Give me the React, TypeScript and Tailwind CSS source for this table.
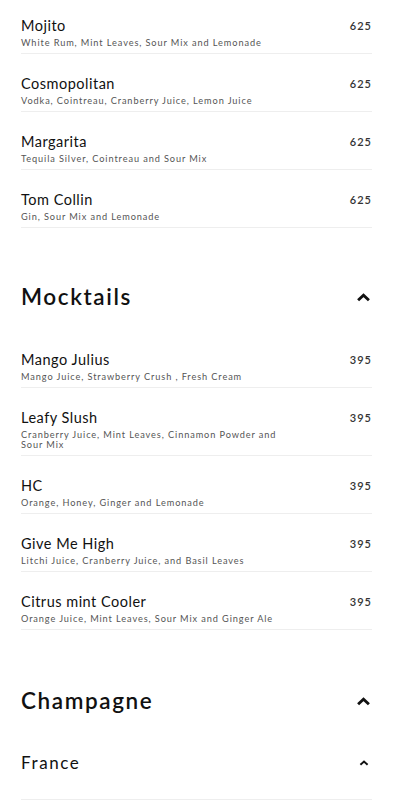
import React from 'react';

interface Item {
    name: string;
    desc: string;
    price: string;
}

const cocktails: Item[] = [
    { name: 'Mojito', desc: 'White Rum, Mint Leaves, Sour Mix and Lemonade', price: '625' },
    { name: 'Cosmopolitan', desc: 'Vodka, Cointreau, Cranberry Juice, Lemon Juice', price: '625' },
    { name: 'Margarita', desc: 'Tequila Silver, Cointreau and Sour Mix', price: '625' },
    { name: 'Tom Collin', desc: 'Gin, Sour Mix and Lemonade', price: '625' },
];

const mocktails: Item[] = [
    { name: 'Mango Julius', desc: 'Mango Juice, Strawberry Crush , Fresh Cream', price: '395' },
    { name: 'Leafy Slush', desc: 'Cranberry Juice, Mint Leaves, Cinnamon Powder and Sour Mix', price: '395' },
    { name: 'HC', desc: 'Orange, Honey, Ginger and Lemonade', price: '395' },
    { name: 'Give Me High', desc: 'Litchi Juice, Cranberry Juice, and Basil Leaves', price: '395' },
    { name: 'Citrus mint Cooler', desc: 'Orange Juice, Mint Leaves, Sour Mix and Ginger Ale', price: '395' },
];

const Chevron = ({ size }: { size: 'lg' | 'sm' }) => (
    <svg
        viewBox="0 0 16 10"
        className={size === 'lg' ? 'w-[15px] h-[9px]' : 'w-[10px] h-[6px]'}
        fill="none"
    >
        <path d="M2 8 L8 2.5 L14 8" stroke="#111" strokeWidth="3.2" strokeLinejoin="miter" />
    </svg>
);

const MenuItem = ({ item }: { item: Item }) => (
    <div className="pt-[20px] pb-[5px] border-b border-[#eeeeee]">
        <div className="flex justify-between items-center">
            <span className="text-[14.5px] leading-[20px] text-[#111] tracking-[0.5px]">{item.name}</span>
            <span className="text-[11px] leading-[20px] font-semibold text-[#333] tracking-[1px]">{item.price}</span>
        </div>
        <p className="mt-[2px] max-w-[262px] text-[9.2px] leading-[10px] text-[#555] tracking-[0.9px]">{item.desc}</p>
    </div>
);

const Section = ({ title, top }: { title: string; top: string }) => (
    <div className={`flex justify-between items-center mb-[17px] pr-[1px] ${top}`}>
        <h2 className="text-[22.5px] leading-[32px] font-semibold text-[#111] tracking-[1.6px]">{title}</h2>
        <Chevron size="lg" />
    </div>
);

export default function App() {
    return (
        <div
            className="w-[400px] h-[800px] overflow-hidden bg-white pl-[21px] pr-[28px]"
            style={{ fontFamily: '"Lato", "Noto Sans", sans-serif' }}
        >
            <div className="-mt-[4px]">
                {cocktails.map((it) => (
                    <MenuItem key={it.name} item={it} />
                ))}
            </div>

            <Section title="Mocktails" top="mt-[53px]" />
            <div>
                {mocktails.map((it) => (
                    <MenuItem key={it.name} item={it} />
                ))}
            </div>

            <Section title="Champagne" top="mt-[55px]" />
            <div className="flex justify-between items-center mt-[34px] pb-[24px] border-b border-[#eeeeee] pr-[3px]">
                <span className="text-[17px] leading-[24px] text-[#111] tracking-[1.6px]">France</span>
                <Chevron size="sm" />
            </div>
        </div>
    );
}
